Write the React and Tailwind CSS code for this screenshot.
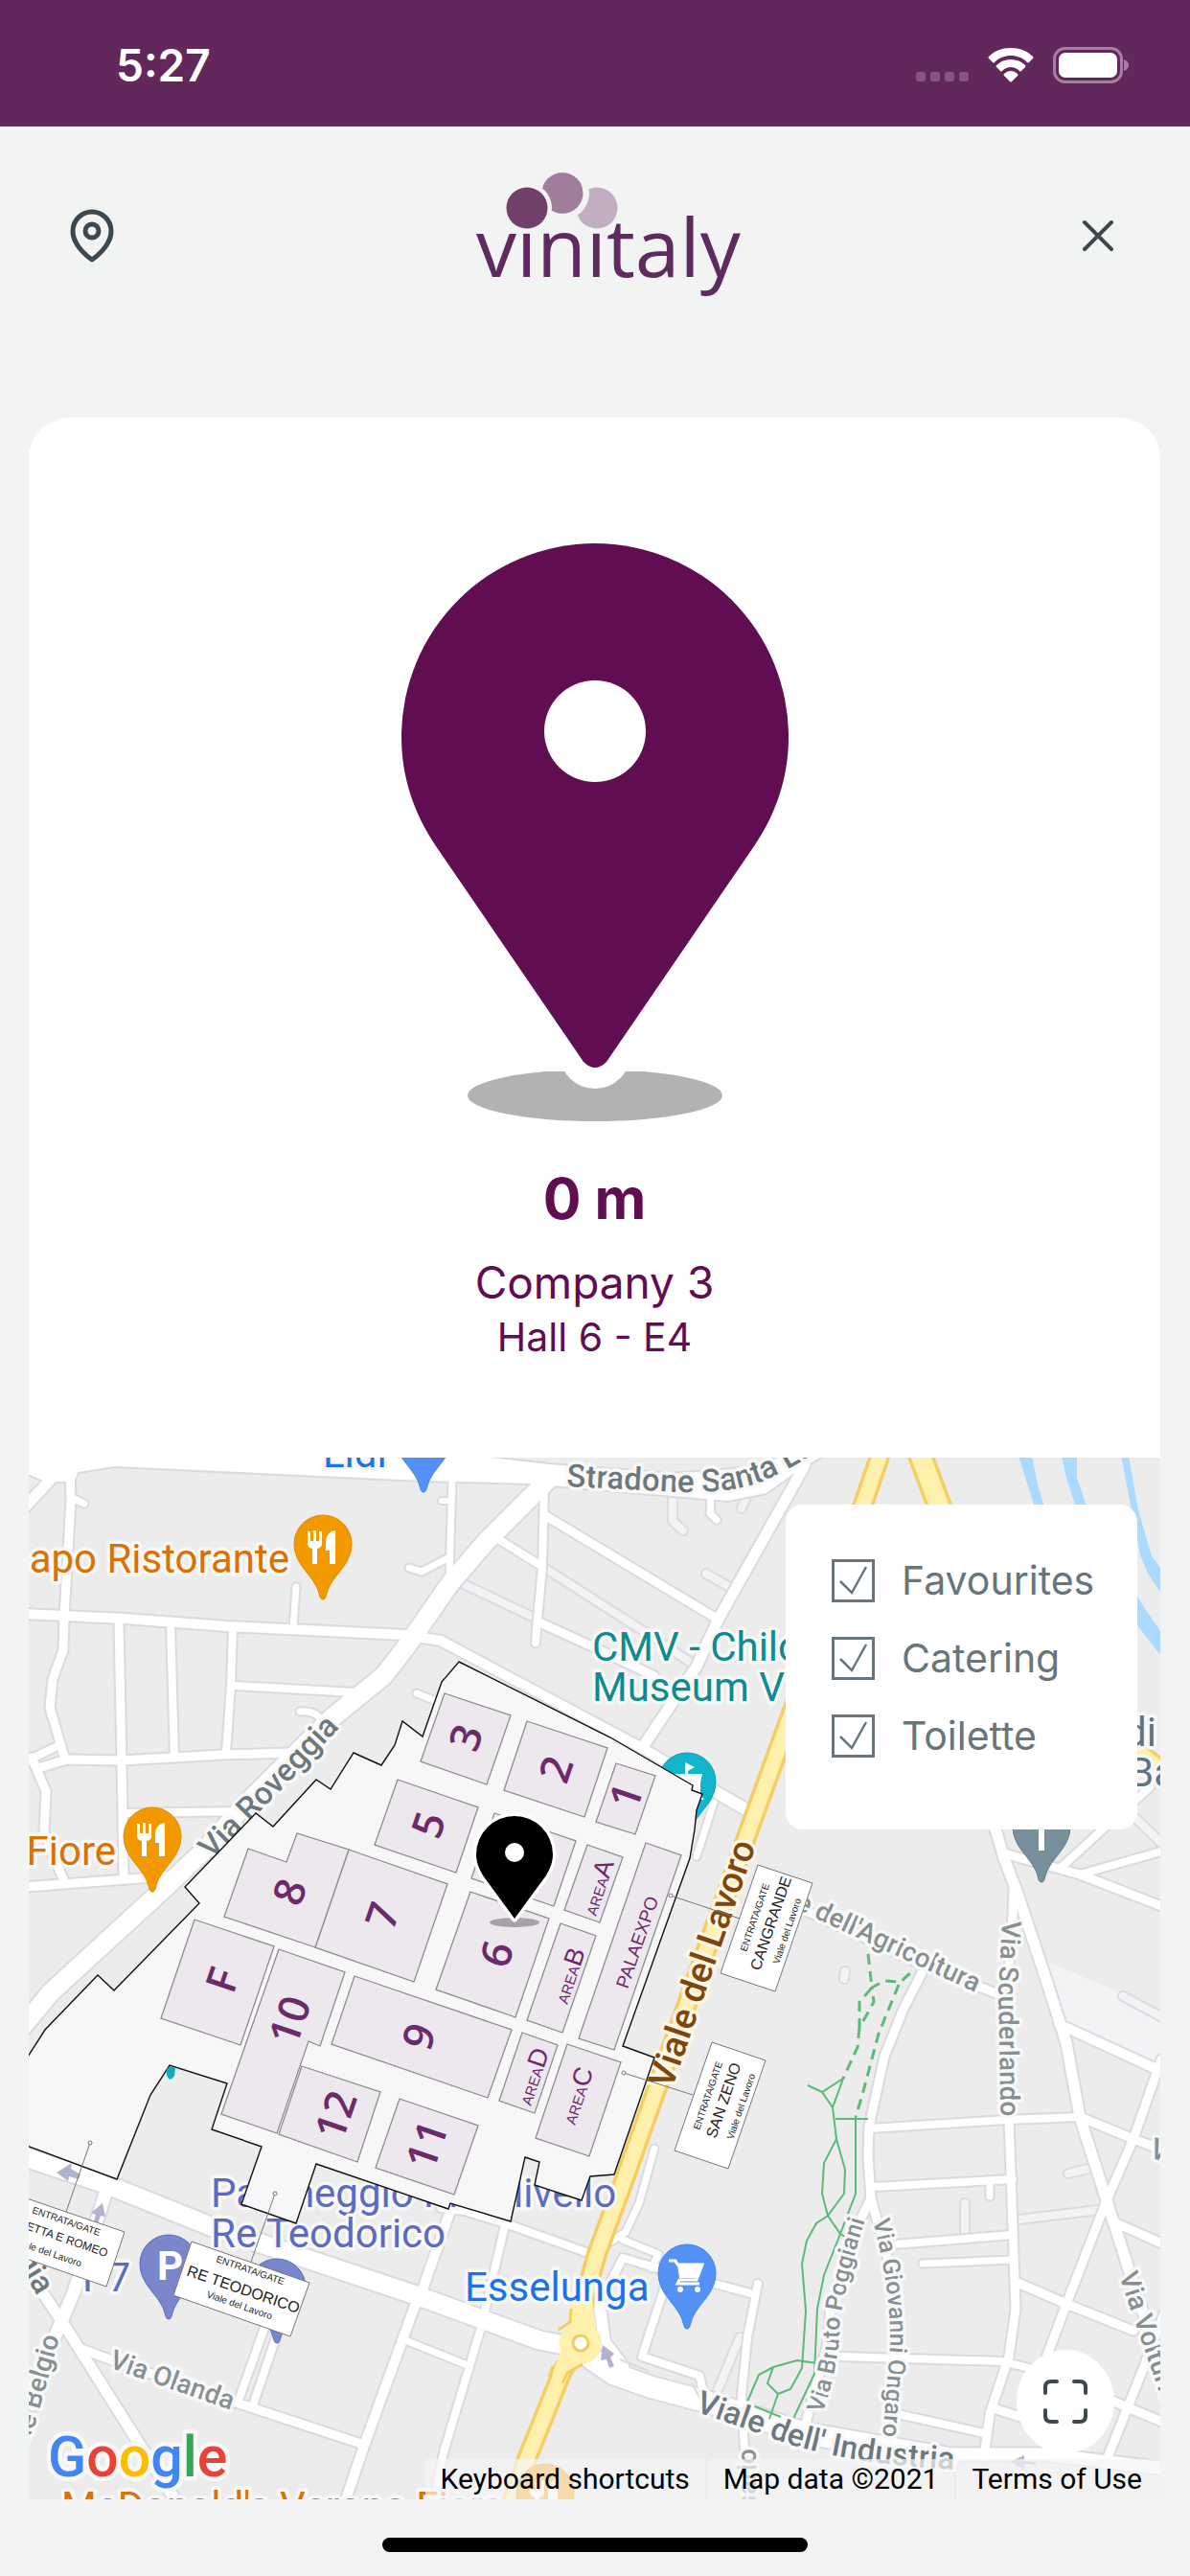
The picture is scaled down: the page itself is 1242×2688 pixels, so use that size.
import React, { useState } from 'react';

const ROADS = [
  // north-west blocks
  { d: 'M22 1578 L48 1550 L64 1532', w: 11 },
  { d: 'M28 1535 L45 1542', w: 7 },
  { d: 'M73 1535 L74 1567 L67 1687 L66 1723 L55 1753 L52 1783 L68 1837', w: 9 },
  { d: 'M75 1564 L88 1570', w: 7 },
  { d: 'M25 1685 L130 1690 L237 1698 L423 1707 L460 1713 L670 1825 L777 1887', w: 10 },
  { d: 'M124 1693 L127 1840 L129 1957', w: 9 },
  { d: 'M178 1696 L182 1834', w: 8 },
  { d: 'M243 1700 L241 1760 L236 1830', w: 8 },
  { d: 'M309 1657 L306 1700', w: 7 },
  { d: 'M245 1760 L370 1767', w: 8 },
  { d: 'M40 1846 L70 1837 L127 1838 L233 1832 L303 1830', w: 9 },
  { d: 'M25 1840 L62 1822', w: 8 },
  { d: 'M33 1835 L48 1870 L46 1913 L66 1962', w: 9 },
  { d: 'M130 1893 L253 1891', w: 8 },
  { d: 'M25 1970 L120 1963 L185 1958', w: 9 },
  { d: 'M313 1787 Q330 1785 338 1799', w: 7 },
  { d: 'M572 1545 L507 1610 L470 1653 L422 1722 L400 1750 L347 1793 L253 1887 L215 1930 L173 1970 L53 2080 L20 2120', w: 19 },
  // north
  { d: 'M427 1637 L440 1641 L467 1627', w: 7 },
  { d: 'M472 1545 L469 1645', w: 7 },
  { d: 'M461 1567 L470 1567', w: 6 },
  { d: 'M568 1550 L566 1637 L561 1690 L559 1715', w: 8 },
  { d: 'M570 1583 L748 1690', w: 9 },
  { d: 'M520 1607 L565 1635', w: 8 },
  { d: 'M561 1693 L620 1720 L683 1750', w: 9 },
  { d: 'M840 1530 L750 1690 L727 1740 L670 1825', w: 11 },
  { d: 'M742 1560 L741 1580 L748 1587', w: 7 },
  { d: 'M435 1768 L455 1776', w: 7 },
  { d: 'M748 1873 L780 1892', w: 9 },
  { d: 'M745 1882 L727 1938', w: 7 },
  // east
  { d: 'M1033 1890 L1048 1940 L1062 1977 L1093 2070 L1113 2133 L1127 2210 L1155 2297 L1180 2375 L1215 2480', w: 11 },
  { d: 'M1058 1972 L1057 2000 L1052 2070 L1053 2210 L1056 2297 L1060 2410 L1053 2460 L1033 2520 L1027 2565', w: 9 },
  { d: 'M1048 1935 L1127 1957 L1215 1991', w: 9 },
  { d: 'M1127 1957 L1215 1932', w: 8 },
  { d: 'M1107 1950 L1153 1908 L1200 1866', w: 8 },
  { d: 'M1105 2113 L1207 2160', w: 10 },
  { d: 'M1212 2150 L1183 2233 L1155 2297 L1115 2400 L1085 2480', w: 9 },
  { d: 'M1127 2210 L1183 2233 L1215 2245', w: 9 },
  { d: 'M820 1985 L960 2050 L1050 2085', w: 9 },
  { d: 'M962 2060 L943 2097 L923 2147 L907 2220 L906 2250 L909 2297', w: 9 },
  { d: 'M908 2222 L1050 2213 L1127 2210', w: 8 },
  { d: 'M911 2283 L1057 2275', w: 8 },
  { d: 'M1033 2278 L1033 2293', w: 7 },
  { d: 'M909 2295 L893 2327 L867 2410 L863 2450 L838 2540', w: 9 },
  { d: 'M909 2295 L930 2370 L937 2460 L929 2565', w: 9 },
  { d: 'M933 2343 L1057 2333', w: 8 },
  { d: 'M963 2363 L1057 2359', w: 7 },
  { d: 'M877 2460 L1047 2465 L1085 2475', w: 8 },
  { d: 'M1062 2383 L1113 2405 L1183 2433', w: 9 },
  { d: 'M1163 2320 L1215 2343', w: 9 },
  { d: 'M937 2520 L1027 2540', w: 8 },
  { d: 'M1040 2515 L1080 2528', w: 9 },
  { d: 'M1158 2505 L1215 2529', w: 9 },
  { d: 'M1215 2415 L1193 2473 L1153 2573', w: 9 },
  { d: 'M970 2562 L1090 2562 L1215 2577', w: 13 },
  // south
  { d: 'M20 2250 L110 2280 L227 2327 L437 2397 L563 2443 L600 2450', w: 19 },
  { d: 'M600 2450 L640 2478 L680 2492 L740 2508 L840 2540 L990 2566', w: 22 },
  { d: 'M625 2400 L631 2445 L650 2470', w: 12 },
  { d: 'M460 2305 L485 2308 L530 2322 L617 2353', w: 8 },
  { d: 'M470 2308 L440 2393 L433 2407 L380 2553 L360 2612', w: 10 },
  { d: 'M527 2323 L502 2430 L463 2560 L453 2612', w: 8 },
  { d: 'M423 2443 L490 2470', w: 7 },
  { d: 'M683 2243 L667 2300 L653 2330 L638 2340', w: 7 },
  { d: 'M650 2338 L687 2353 L680 2368', w: 7 },
  { d: 'M636 2385 L650 2357 L693 2370 L787 2395', w: 8 },
  { d: 'M791 2384 L780 2440 L774 2500 L780 2612', w: 8 },
  { d: 'M693 2390 L670 2460 L730 2480 L735 2500', w: 8 },
  { d: 'M20 2357 L67 2427 L170 2590 L185 2612', w: 11 },
  { d: 'M110 2290 L77 2393 L57 2440 L35 2510', w: 13 },
  { d: 'M85 2452 L120 2465 L237 2505 L380 2552', w: 9 },
  { d: 'M277 2427 L250 2503', w: 8 },
  { d: 'M293 2425 L265 2508', w: 8 },
];

const LANES = [
  'M565 1635 L670 1702 L723 1737',
  'M482 1653 L560 1690',
  'M737 1643 L763 1658',
  'M702 1560 L702 1588 L713 1598',
  'M780 1560 L774 1575',
  'M1185 1898 L1215 1927',
  'M1172 2084 L1215 2107',
  'M1115 2269 L1140 2263',
  'M1063 2317 L1147 2307',
  'M1007 2300 L1007 2333',
  'M772 2440 L747 2500',
  'M882 2058 L881 2066',
];

const HALLS = [
  '464,1768 533,1791 508,1863 439,1839',
  '550,1797 634,1825 610,1897 526,1869',
  '643,1841 684,1854 663,1915 622,1902',
  '415,1858 499,1887 476,1955 391,1926',
  '516,1893 601,1922 578,1990 492,1961',
  '491,1975 573,2003 538,2106 455,2077',
  '613,1926 650,1939 626,2007 589,1994',
  '585,2008 622,2021 587,2122 550,2109',
  '674,1924 711,1937 641,2140 604,2128',
  '545,2122 582,2135 558,2206 521,2193',
  '592,2134 648,2153 615,2251 559,2232',
  '370,2063 534,2119 509,2190 346,2134',
  '364,1931 467,1967 432,2069 329,2033',
  '259,1930 299,1944 310,1914 364,1931 329,2033 234,2001',
  '203,2004 286,2032 251,2135 168,2107',
  '291,2035 360,2059 334,2136 322,2131 289,2227 231,2207',
  '315,2157 397,2184 373,2257 291,2228',
  '417,2191 499,2219 474,2291 392,2263',
];

const HALL_LABELS = [
  { t: '3', x: 486, y: 1814 },
  { t: '2', x: 580, y: 1847 },
  { t: '1', x: 653, y: 1875 },
  { t: '5', x: 447, y: 1905 },
  { t: '6', x: 518, y: 2040 },
  { t: '9', x: 437, y: 2126 },
  { t: '7', x: 399, y: 2000 },
  { t: '8', x: 302, y: 1975 },
  { t: 'F', x: 232, y: 2067 },
  { t: '10', x: 302, y: 2109 },
  { t: '12', x: 350, y: 2208 },
  { t: '11', x: 445, y: 2239 },
];

const AREA_LABELS = [
  { t: 'A', x: 622, y: 2001 },
  { t: 'B', x: 592, y: 2093 },
  { t: 'D', x: 554, y: 2199 },
  { t: 'C', x: 600, y: 2219 },
];

const STREETS = [
  { id: 'roveggia', t: 'Via Roveggia', d: 'M221 1942 L300 1862 L380 1776', size: 33, c: '#6d787d' },
  { id: 'stradone', t: 'Stradone Santa Lucia', d: 'M591 1552 L690 1557 Q760 1562 800 1545 Q850 1522 900 1480', size: 33, c: '#6d787d' },
  { id: 'agricoltura', t: "Viale dell'Agricoltura", d: 'M757 1958 L852 2003 L1018 2080', size: 28, c: '#868f92', end: true },
  { id: 'scuderlando', t: 'Via Scuderlando', d: 'M1046 2005 L1042 2080 L1045 2240', size: 28, c: '#868f92' },
  { id: 'poggiani', t: 'Via Bruto Poggiani', d: 'M858 2520 Q876 2470 876 2430 Q880 2390 905 2310', size: 25, c: '#868f92' },
  { id: 'ongaro', t: 'Via Giovanni Ongaro', d: 'M911 2318 Q930 2390 929 2450 L920 2560', size: 25, c: '#868f92' },
  { id: 'volturno', t: 'Via Volturno', d: 'M1168 2375 L1183 2420 L1225 2540', size: 28, c: '#868f92' },
  { id: 'industria', t: "Viale dell' Industria", d: 'M725 2517 L800 2543 Q880 2575 1030 2579', size: 33, c: '#6d787d' },
  { id: 'olanda', t: 'Via Olanda', d: 'M113 2471 L270 2526', size: 28, c: '#868f92' },
  { id: 'belgio', t: 'Viale Belgio', d: 'M10 2590 L37 2530 L62 2440', size: 28, c: '#868f92', end: true },
  { id: 'gia', t: 'Via Roveggia', d: 'M-60 2236 L39 2397', size: 33, c: '#6d787d', end: true },
  { id: 'rosario', t: 'Via Rosario', d: 'M789 2720 L789 2556', size: 28, c: '#868f92', end: true },
];

const GATES = [
  {
    box: '791,1947 848,1966 809,2079 752,2060',
    lead: [700, 1979, 772, 2003],
    lines: [
      { t: 'ENTRATA/GATE', x: 779, y: 2038, size: 10 },
      { t: 'CANGRANDE', x: 793, y: 2058, size: 16 },
      { t: 'Viale del Lavoro', x: 813, y: 2051, size: 10 },
    ],
    angle: -71,
  },
  {
    box: '743,2132 799,2151 760,2264 704,2245',
    lead: [651, 2164, 723, 2187],
    lines: [
      { t: 'ENTRATA/GATE', x: 730, y: 2224, size: 10 },
      { t: 'SAN ZENO', x: 747, y: 2233, size: 16 },
      { t: 'Viale del Lavoro', x: 765, y: 2234, size: 10 },
    ],
    angle: -71,
  },
  {
    box: '200,2340 323,2383 303,2439 181,2396',
    lead: [287, 2290, 262, 2361],
    lines: [
      { t: 'ENTRATA/GATE', x: 225, y: 2361, size: 10 },
      { t: 'RE TEODORICO', x: 194, y: 2375, size: 16 },
      { t: 'Viale del Lavoro', x: 215, y: 2398, size: 10 },
    ],
    angle: 19,
  },
  {
    box: '-10,2282 130,2330 111,2387 -30,2338',
    lead: [94, 2237, 69, 2309],
    lines: [
      { t: 'ENTRATA/GATE', x: 33, y: 2310, size: 10 },
      { t: 'GIULIETTA E ROMEO', x: -3, y: 2317, size: 12 },
      { t: 'Viale del Lavoro', x: 16, y: 2343, size: 10 },
    ],
    angle: 19,
  },
];

const PLACES = [
  { t: 'apo Ristorante', x: 302, y: 1642, c: '#db7100', end: true },
  { t: 'Fiore', x: 121, y: 1947, c: '#db7100', end: true },
  { t: 'Lidl', x: 337, y: 1532, c: '#1a73e8' },
  { t: 'CMV - Child', x: 618, y: 1734, c: '#0e8a90' },
  { t: 'Museum V', x: 618, y: 1776, c: '#0e8a90' },
  { t: 'Parcheggio Multilivello', x: 220, y: 2304, c: '#5c6bc0' },
  { t: 'Re Teodorico', x: 220, y: 2346, c: '#5c6bc0' },
  { t: 'P7', x: 86, y: 2392, c: '#5c6bc0' },
  { t: 'Esselunga', x: 485, y: 2402, c: '#1a73e8' },
  { t: "McDonald's Verona Fiera", x: 64, y: 2631, c: '#db7100' },
  { t: 'di', x: 1207, y: 1823, c: '#5f7482', end: true },
  { t: 'Ba', x: 1178, y: 1865, c: '#5f7482' },
];

const OUTLINE =
  'M479 1735 L637 1814 L723 1864 L722 1869 L733 1873 L727 1890 L725 1910 L720 1940 L650 2136 L683 2148 L641 2270 L616 2272 L607 2297 L558 2281 L563 2257 L548 2252 L533 2319 L470 2300 L468 2306 L330 2259 L309 2321 L252 2301 L273 2241 L221 2223 L237 2175 L177 2156 L157 2187 L122 2275 L20 2237 L20 2161 L47 2119 L102 2062 L119 2078 L208 1987 L193 1970 L267 1893 L285 1907 L330 1858 L345 1868 L369 1830 L398 1843 L412 1822 L420 1797 L441 1813 L461 1756 Z';

const PIN = 'M0 58 C-4 58 -3 51 -7 44 C-14 30 -30 20 -30 0 A30 30 0 1 1 30 0 C30 20 14 30 7 44 C3 51 4 58 0 58 Z';

const PoiPin = ({ x, y, fill, stroke, children }) => (
  <g transform={`translate(${x} ${y})`}>
    <path d={PIN} fill={fill} stroke={stroke} strokeWidth="1" />
    {children}
  </g>
);

const Cutlery = () => (
  <g fill="#fff">
    <path d="M-16 -13 h3 v10 h3 v-11 h3 v11 h3 v-10 h3 v13 q0 4 -5 5 v16 h-5 v-16 q-5 -1 -5 -5 Z" />
    <path d="M13 -14 v35 h-6 v-14 h-4 v-10 q1 -10 10 -11 Z" />
  </g>
);

const VeronaMap = () => (
  <svg className="block w-full h-auto" viewBox="30 1522 1181 1087" role="img" aria-label="Map of the exhibition centre">
    <defs>
      {STREETS.map((s) => (
        <path key={s.id} id={s.id} d={s.d} />
      ))}
    </defs>
    <rect x="30" y="1522" width="1181" height="1087" fill="#ececec" />
    <path d="M1090 2047 L1170 2080 L1215 2100 L1215 2155 L1107 2110 Z" fill="#f1f3f5" />

    <g fill="#aadaff">
      <path d="M1063 1520 H1077 L1083 1550 L1095 1590 H1085 Z" />
      <path d="M1108 1520 H1124 V1543 L1140 1590 H1128 L1113 1543 Z" />
      <path d="M1170 1520 H1178 L1188 1577 L1202 1625 L1215 1642 V1668 L1198 1643 L1190 1623 L1181 1577 Z" />
      <path d="M1180 1657 L1215 1709 V1733 L1180 1688 Z" />
    </g>

    <g fill="none" strokeLinecap="round" strokeLinejoin="round">
      {LANES.map((d) => (
        <path key={d} d={d} stroke="#dcdce1" strokeWidth="12" />
      ))}
      {LANES.map((d) => (
        <path key={d} d={d} stroke="#f1f3f4" strokeWidth="8" />
      ))}
      {ROADS.map((r) => (
        <path key={r.d} d={r.d} stroke="#dadae0" strokeWidth={r.w + 4} />
      ))}
    </g>
    <path
      d="M20 1515 H460 L573 1528 L700 1538 L780 1532 L830 1515 H870 L835 1535 L800 1560 L760 1568 L553 1550 L440 1547 L120 1532 L82 1538 L78 1548 H58 L20 1528 Z"
      fill="#fff"
      stroke="#dadae0"
      strokeWidth="2"
    />
    <g fill="none" stroke="#fff" strokeLinecap="round" strokeLinejoin="round">
      {ROADS.map((r) => (
        <path key={r.d} d={r.d} strokeWidth={r.w} />
      ))}
    </g>
    <path d="M647 2463 L677 2475 M722 2488 L731 2504" stroke="#dadae0" strokeWidth="2" />

    <g fill="none" strokeLinejoin="round">
      <g stroke="#f6cd63">
        <path d="M920 1515 L831 1775 L782 1910 L650 2280 L623 2353 L610 2400 L606 2446 L587 2475 L550 2567 L533 2615" strokeWidth="22" />
        <path d="M957 1510 L1000 1625" strokeWidth="27" />
        <path d="M1175 1815 L1215 1847" strokeWidth="16" />
      </g>
      <g stroke="#fff0ac">
        <path d="M920 1515 L831 1775 L782 1910 L650 2280 L623 2353 L610 2400 L606 2446 L587 2475 L550 2567 L533 2615" strokeWidth="15" />
        <path d="M957 1510 L1000 1625" strokeWidth="20" />
        <path d="M1175 1815 L1215 1847" strokeWidth="10" />
      </g>
    </g>
    <circle cx="606" cy="2446" r="22" fill="#fff0ac" />
    <path d="M595 2405 L618 2400 L622 2430 H592 Z M586 2452 L610 2466 L590 2480 L576 2480 Z" fill="#fff0ac" />
    <path d="M596 2410 L595 2424 L583 2432 M577 2470 L573 2482 M608 2468 L592 2477 L587 2488" fill="none" stroke="#f6cd63" strokeWidth="3" />
    <circle cx="606" cy="2446" r="8" fill="#fff" stroke="#f0ca66" strokeWidth="3" />

    <g fill="none" stroke="#5bba78" strokeWidth="2">
      <path d="M843 2177 L858 2184 L880 2170 L869 2200 L858 2184 M869 2200 L873 2233 L882 2265 L881 2290 L864 2313 L852 2321 L842 2339 L837 2363 L841 2412 L837 2472 L825 2494 L812 2499 L801 2488 L807 2471" />
      <path d="M873 2233 L860 2258 L858 2290 L864 2313 L877 2332 L882 2335 M872 2212 L906 2212" />
      <path d="M893 2210 V2290 L877 2332 L860 2375 L853 2410 L850 2478 L827 2527" />
      <path d="M853 2467 L832 2464 L807 2471 L792 2479 L780 2507 M812 2499 L803 2525 M785 2511 L815 2523" />
      <path d="M906 2040 L910 2075 L897 2090 V2117 L912 2090 L910 2075 L923 2068 L940 2069 L952 2058 M897 2117 L895 2137 L880 2170" strokeWidth="3" strokeDasharray="11 7" />
      <path d="M938 2072 L917 2123 L900 2187 L893 2210" strokeWidth="3" strokeDasharray="11 7" />
    </g>

    <g fill="#b0b3cf">
      <path d="M59 2268 L75 2258 L74 2264 L84 2270 L82 2275 L72 2272 L71 2277 Z" />
      <path d="M107 2300 L110 2314 L105 2313 L102 2321 L98 2319 L100 2312 L95 2310 Z" />
      <path d="M629 2448 L641 2457 L637 2461 L641 2470 L636 2472 L633 2463 L627 2464 Z" />
      <path d="M1054 2570 L1069 2563 V2569 L1081 2570 V2573 L1069 2572 V2578 Z" />
    </g>

    <g fontFamily="Roboto, sans-serif" stroke="#f8f8f8" strokeWidth="7" strokeLinejoin="round" paintOrder="stroke">
      <g fontWeight="500">
        {STREETS.map((s) => (
          <text key={s.id} fontSize={s.size} fill={s.c} textAnchor={s.end ? 'end' : 'start'}>
            <textPath href={`#${s.id}`} startOffset={s.end ? '100%' : '0%'}>
              {s.t}
            </textPath>
          </text>
        ))}
      </g>
      <text transform="translate(1198 2251) rotate(20)" fontSize="30" fontWeight="500" fill="#868f92">
        Via
      </text>
      <g fontSize="42">
        {PLACES.map((p) => (
          <text key={p.t} x={p.x} y={p.y} fill={p.c} textAnchor={p.end ? 'end' : 'start'}>
            {p.t}
          </text>
        ))}
      </g>
      <text transform="translate(701 2182) rotate(-71)" fontSize="38" fontWeight="500" fill="#81450b" stroke="#fdf6e3">
        Viale del Lavoro
      </text>
    </g>

    <PoiPin x={337} y={1612} fill="#f29900" stroke="#e68a00">
      <Cutlery />
    </PoiPin>
    <PoiPin x={159} y={1917} fill="#f29900" stroke="#e68a00">
      <Cutlery />
    </PoiPin>
    <PoiPin x={569} y={2602} fill="#f29900" stroke="#e68a00">
      <Cutlery />
    </PoiPin>
    <PoiPin x={442} y={1500} fill="#5491f5" stroke="#4285f4" />
    <PoiPin x={176} y={2363} fill="#7986cb" stroke="#5c6bc0">
      <text x="-12" y="17" fontFamily="Roboto, sans-serif" fontWeight="700" fontSize="42" fill="#fff">
        P
      </text>
    </PoiPin>
    <PoiPin x={289} y={2388} fill="#7986cb" stroke="#5c6bc0" />
    <PoiPin x={1087} y={1907} fill="#78909c" stroke="#5f7d8c">
      <path d="M0 -18 V25 M-10 -4 H10" stroke="#fff" strokeWidth="6" />
    </PoiPin>
    <PoiPin x={717} y={2373} fill="#5491f5" stroke="#4285f4">
      <path d="M-19 -13 h7 l2 4 h26 l-6 16 h-18 l-2 4 h23" fill="none" stroke="#fff" strokeWidth="3" />
      <path d="M-10 -9 h26 l-6 14 h-18 Z" fill="#fff" />
      <circle cx="-7" cy="17" r="3" fill="#fff" />
      <circle cx="11" cy="17" r="3" fill="#fff" />
    </PoiPin>
    <PoiPin x={717} y={1860} fill="#12b5cb" stroke="#129eaf">
      <path d="M-2 -20 l10 5 l-7 4 v3 h15 l-2 9 v12 l4 6 h-34 v-27 h14 Z" fill="#fff" />
    </PoiPin>

    <path d={OUTLINE} fill="#f7f7f7" stroke="#111" strokeWidth="1.4" />
    <path d="M174 2160 L178 2157 L183 2159 L182 2167 Q179 2172 176 2170 Q173 2166 174 2160 Z" fill="#12a9bd" />

    <g fill="#ede7ee" stroke="#8c8c8c" strokeWidth="1.3">
      {HALLS.map((points) => (
        <polygon key={points} points={points} />
      ))}
    </g>
    <g fontFamily="'Open Sans', sans-serif" fill="#6d2a6a">
      {HALL_LABELS.map((l) => (
        <text
          key={l.t}
          transform={`translate(${l.x} ${l.y}) rotate(-71)`}
          x="0"
          y="16"
          fontSize="44"
          fontWeight="600"
          textAnchor="middle"
        >
          {l.t}
        </text>
      ))}
    </g>
    <g fontFamily="'Liberation Sans', Arial, sans-serif" fill="#6d2a6a">
      {AREA_LABELS.map((l) => (
        <text key={l.t} transform={`translate(${l.x} ${l.y}) rotate(-71)`} fontSize="15">
          AREA<tspan fontSize="27">{l.t}</tspan>
        </text>
      ))}
      <text transform="translate(655 2077) rotate(-71)" fontSize="19">
        PALAEXPO
      </text>
    </g>

    {GATES.map((g) => (
      <g key={g.box} fontFamily="'Liberation Sans', Arial, sans-serif" fill="#222">
        <line x1={g.lead[0]} y1={g.lead[1]} x2={g.lead[2]} y2={g.lead[3]} stroke="#777" strokeWidth="1" />
        <circle cx={g.lead[0]} cy={g.lead[1]} r="2" fill="#f7f7f7" stroke="#777" strokeWidth="1" />
        <polygon points={g.box} fill="#fff" stroke="#777" strokeWidth="1" />
        {g.lines.map((l) => (
          <text key={l.t} transform={`translate(${l.x} ${l.y}) rotate(${g.angle})`} fontSize={l.size}>
            {l.t}
          </text>
        ))}
      </g>
    ))}

    <ellipse cx="537" cy="2007" rx="26" ry="5" fill="#a6a0a7" />
    <path
      d="M537 2003 L504 1958 C500 1951 497 1944 497 1936 A40 40 0 1 1 577 1936 C577 1944 574 1951 570 1958 Z"
      fill="#000"
      stroke="#fff"
      strokeWidth="7"
      strokeLinejoin="round"
      paintOrder="stroke"
    />
    <circle cx="537" cy="1934" r="10" fill="#fff" />

    <text
      x="50"
      y="2585"
      fontFamily="Roboto, sans-serif"
      fontSize="59"
      fontWeight="500"
      stroke="#f8f8f8"
      strokeWidth="9"
      strokeLinejoin="round"
      paintOrder="stroke"
    >
      <tspan fill="#4285f4">G</tspan>
      <tspan fill="#ea4335">o</tspan>
      <tspan fill="#fbbc04">o</tspan>
      <tspan fill="#4285f4">g</tspan>
      <tspan fill="#34a853">l</tspan>
      <tspan fill="#ea4335">e</tspan>
    </text>
  </svg>
);

const StatusBar = () => (
  <div className="flex h-[132px] items-center justify-between bg-[#62285b] pt-1 pl-[121px] pr-16 text-white">
    <span className="text-[46px] font-semibold leading-none">5:27</span>
    <div className="flex items-center gap-5">
      <div className="flex gap-[5px] pt-6">
        {[0, 1, 2, 3].map((i) => (
          <span key={i} className="size-[10px] rounded-[3px] bg-[#865680]" />
        ))}
      </div>
      <svg className="h-[36px] w-[48px]" viewBox="0 0 48 36" fill="#fff">
        <path d="M24 0 C33 0 41 3 47 9 Q48 10 47 11 L43 15 Q42 16 41 15 C36 10 30 8 24 8 S12 10 7 15 Q6 16 5 15 L1 11 Q0 10 1 9 C7 3 15 0 24 0 Z" />
        <path d="M24 12 C30 12 35 14 39 18 Q40 19 39 20 L35 24 Q34 25 33 24 C30 21 27 20 24 20 S18 21 15 24 Q14 25 13 24 L9 20 Q8 19 9 18 C13 14 18 12 24 12 Z" />
        <path d="M24 24 Q28 24 31 27 Q32 28 31 29 L25 35 Q24 36 23 35 L17 29 Q16 28 17 27 Q20 24 24 24 Z" />
      </svg>
      <svg className="h-[38px] w-[79px]" viewBox="0 0 79 38">
        <rect x="1.5" y="1.5" width="70" height="35" rx="11" fill="none" stroke="#a67fa2" strokeWidth="3" />
        <rect x="6" y="6" width="61" height="26" rx="7" fill="#fff" />
        <path d="M74 13 Q79 15 79 19 T74 25 Z" fill="#a67fa2" />
      </svg>
    </div>
  </div>
);

const Logo = () => (
  <svg className="h-[155px] w-[310px]" viewBox="-14 0 310 155" role="img" aria-label="vinitaly">
    <circle cx="143" cy="52" r="21.5" fill="#c2aec1" />
    <circle cx="107" cy="36.5" r="28" fill="#f1f4f3" />
    <circle cx="107" cy="36.5" r="21.5" fill="#a07e9b" />
    <circle cx="70" cy="52" r="26" fill="#f1f4f3" />
    <circle cx="70" cy="52" r="21.5" fill="#703f6a" />
    <text x="17" y="124" fontFamily="'Open Sans', sans-serif" fontSize="84" fontWeight="500" fill="#5f2a5f">
      vınıtaly
    </text>
  </svg>
);

const Header = () => (
  <header className="flex items-start justify-between px-[72px] pt-[33px] pb-[116px] text-[#3c484e]">
    <button type="button" aria-label="My position" className="mt-[53px] w-12">
      <svg className="h-[56px] w-[48px]" viewBox="0 0 48 56" fill="none" stroke="currentColor" strokeWidth="5">
        <path d="M24 53 C24 53 44 40 44 23 A20 20 0 0 0 4 23 C4 40 24 53 24 53 Z" strokeLinejoin="round" />
        <circle cx="24" cy="23" r="7" />
      </svg>
    </button>
    <Logo />
    <button type="button" aria-label="Close" className="mt-16 flex w-12 justify-center">
      <svg className="size-[34px]" viewBox="0 0 34 34" stroke="currentColor" strokeWidth="4" strokeLinecap="round">
        <path d="M3 3 L31 31 M31 3 L3 31" />
      </svg>
    </button>
  </header>
);

const Destination = () => (
  <section className="flex flex-col items-center pt-[131px] pb-[100px] text-[#600d52]">
    <svg className="h-[604px] w-[404px]" viewBox="0 0 404 604">
      <ellipse cx="202" cy="576" rx="133" ry="27" fill="#b2b2b2" />
      <rect x="60" y="545" width="284" height="6" fill="#fff" />
      <circle cx="202" cy="532" r="37" fill="#fff" />
      <path
        d="M202 0 A202 202 0 0 1 404 202 C404 244 391 282 368 316 L214 541 Q202 553 190 541 L36 316 C13 282 0 244 0 202 A202 202 0 0 1 202 0 Z"
        fill="currentColor"
      />
      <circle cx="202" cy="196" r="53" fill="#fff" />
    </svg>
    <h1 className="mt-[44px] text-[59px] font-bold leading-[72px]">0 m</h1>
    <p className="mt-5 text-[46px] leading-[62px]">Company 3</p>
    <p className="text-[41px] leading-[52px]">Hall 6 - E4</p>
  </section>
);

const FilterPanel = () => {
  const [checked, setChecked] = useState({ Favourites: true, Catering: true, Toilette: true });

  return (
    <div className="absolute top-[49px] right-6 flex w-[367px] flex-col gap-9 rounded-[18px] bg-white px-12 pt-[57px] pb-[75px]">
      {Object.keys(checked).map((name) => (
        <label key={name} className="flex items-center gap-7 text-[41px] leading-[45px] text-[#68757b]">
          <span className="relative size-[45px] shrink-0">
            <input
              type="checkbox"
              checked={checked[name]}
              onChange={(e) => setChecked({ ...checked, [name]: e.target.checked })}
              className="peer block size-[45px] appearance-none border-3 border-[#68757b] bg-white"
            />
            <svg
              className="pointer-events-none absolute inset-0 hidden size-[45px] peer-checked:block"
              viewBox="0 0 45 45"
              fill="none"
              stroke="#68757b"
              strokeWidth="2.5"
            >
              <path d="M9 23 L21 35 L36 8" />
            </svg>
          </span>
          {name}
        </label>
      ))}
    </div>
  );
};

const Attribution = () => (
  <div className="absolute right-0 bottom-0 flex gap-[3px] font-[Roboto,sans-serif] text-[30px] leading-[42px] text-black">
    <button type="button" className="bg-[#f5f5f5]/70 px-4">
      Keyboard shortcuts
    </button>
    <span className="bg-[#f5f5f5]/70 px-4">Map data ©2021</span>
    <a href="#terms" className="bg-[#f5f5f5]/70 pr-[19px] pl-4">
      Terms of Use
    </a>
  </div>
);

export default function App() {
  return (
    <div className="min-h-screen bg-[#f1f4f3] font-[Inter,sans-serif]">
      <StatusBar />
      <Header />
      <main className="mr-[31px] ml-[30px] overflow-hidden rounded-t-[42px] bg-white">
        <Destination />
        <div className="relative overflow-hidden">
          <VeronaMap />
          <FilterPanel />
          <button
            type="button"
            aria-label="Full screen"
            className="absolute right-12 bottom-12 flex h-[108px] w-[102px] items-center justify-center rounded-[50%] bg-white"
          >
            <svg className="size-[46px]" viewBox="0 0 46 46" fill="none" stroke="#3c484e" strokeWidth="4" strokeLinecap="round">
              <path d="M2 14 V8 Q2 2 8 2 H14 M32 2 H38 Q44 2 44 8 V14 M44 32 V38 Q44 44 38 44 H32 M14 44 H8 Q2 44 2 38 V32" />
            </svg>
          </button>
          <Attribution />
        </div>
      </main>
      <div className="mx-auto mt-10 h-[15px] w-[444px] rounded-full bg-black" />
    </div>
  );
}
